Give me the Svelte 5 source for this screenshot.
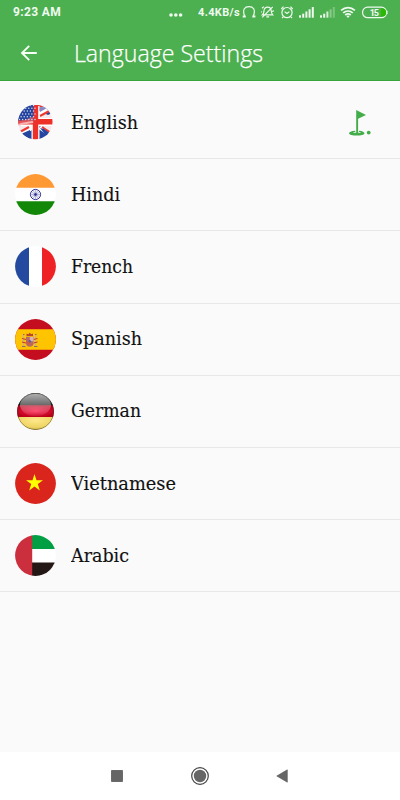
<script>
  const languages = [
    { name: 'English', flag: 'en', width: 67 },
    { name: 'Hindi', flag: 'in', width: 49 },
    { name: 'French', flag: 'fr', width: 62 },
    { name: 'Spanish', flag: 'es', width: 71 },
    { name: 'German', flag: 'de', width: 70 },
    { name: 'Vietnamese', flag: 'vn', width: 105 },
    { name: 'Arabic', flag: 'ae', width: 58 }
  ];
  const stars = [];
  for (let r = 0; r < 6; r++) for (let c = 0; c < 6; c++) stars.push([3 + c * 3.1 + (r % 2) * 1.5, 3.5 + r * 2.8]);
  const spokes = Array.from({ length: 12 }, (_, i) => i * 30);
</script>

<div class="screen">
  <header>
    <div class="status">
      <span class="time">9:23 AM</span>
      <svg class="dots" width="14" height="4" viewBox="0 0 14 4" fill="#eefaee"><circle cx="2" cy="2" r="1.8" /><circle cx="6.8" cy="2" r="1.8" /><circle cx="11.6" cy="2" r="1.8" /></svg>
      <span class="speed">4.4KB/s</span>
      <svg class="icons" width="148" height="16" viewBox="241 4 148 16" fill="none" stroke="#effaef" stroke-width="1.2">
        <path d="M244.600 16 C242 9 245 6.700 249 6.700 S256 9 253.400 16" />
        <path d="M242.700 16.500h3.100M252.300 16.500h3.100" stroke-width="2" />
        <path d="M262.500 14.800c1.500-1.300 1.300-2.500 1.500-4.300.3-2.500 1.900-3.400 3.700-3.400s3.300 1.500 3.500 3.700c.1 1.700.3 2.700 1.500 4zM266.300 16.800h2.800M262.200 17.300l10.500-10.500M262 8.200l1.800-1.600M271.800 11.500l2.200-.8M262 12l-.9-.2" />
        <circle cx="287" cy="12.600" r="5.100" />
        <path d="M284.600 11.600l2.400 1.900 2.400-1.900M281.300 9l2.200-2.300M292.700 9l-2.200-2.300M283.200 16.800l-1.200 1.200M290.800 16.800l1.200 1.200" />
        <g stroke="none" fill="#effaef">
          <rect x="299" y="15.300" width="2" height="2.400" /><rect x="302.200" y="13.700" width="2" height="4" /><rect x="305.400" y="11.500" width="2" height="6.200" /><rect x="308.600" y="9.300" width="2" height="8.400" /><rect x="311.800" y="7" width="2" height="10.700" />
          <rect x="320" y="15.300" width="2" height="2.400" /><rect x="323.200" y="13.700" width="2" height="4" /><rect x="326.400" y="11.500" width="2" height="6.200" opacity=".85" /><rect x="329.600" y="9.300" width="2" height="8.400" opacity=".38" /><rect x="332.800" y="7" width="2" height="10.700" opacity=".3" />
        </g>
        <path d="M341.100 10.400C345.200 6.600 350.800 6.600 354.900 10.400M343.200 12.900C346 10.400 350 10.400 352.800 12.900M345.200 15C346.800 13.600 349.200 13.600 350.800 15" stroke-width="1.700" />
        <path d="M346.300 16.100Q348 15 349.700 16.100L348 17.900z" fill="#effaef" stroke="none" />
        <rect x="362.600" y="7.100" width="23.800" height="10.600" rx="5" />
        <path d="M381 8.500h1.300a3.600 3.600 0 0 1 0 7.800H381z" fill="#28b900" stroke="none" />
        <path d="M387.200 10.700v3.400" stroke-width=".8" />
        <text x="369.800" y="15.600" font-size="9" font-weight="700" font-family="Roboto, sans-serif" textLength="9" fill="#effaef" stroke="none">15</text>
      </svg>
    </div>
    <div class="toolbar">
      <svg class="back" width="18" height="18" viewBox="0 0 18 18" fill="none" stroke="#f5fff5" stroke-width="1.900"><path d="M16.800 9H2.500M9.200 1.800L2 9L9.200 16.200" /></svg>
      <svg class="title" width="200" height="36" viewBox="0 0 200 36"><text x="0" y="27" textLength="189" lengthAdjust="spacingAndGlyphs">Language Settings</text></svg>
    </div>
  </header>

  <main>
    {#each languages as { name, flag, width }}
      <div class="row">
        <svg class="flag" width="41" height="41" viewBox="0 0 41 41">
          <defs>
            <clipPath id="disc-{flag}"><circle cx={flag === 'en' ? 20.3 : 20.5} cy={flag === 'en' ? 20 : 20.5} r={flag === 'en' ? 17.2 : flag === 'de' ? 18.5 : 20.4} /></clipPath>
          </defs>
          <g clip-path="url(#disc-{flag})">
            {#if flag === 'en'}
              <path fill="#f5e9ec" d="M0 0h41v41H0z" />
              <path d="M22 3h10l5 8-4 2-11-5zM24 24h4l8 8-3 8h-9zM5 33l9-5h3v11H8z" fill="#2446a0" />
              <path d="M22 13L37 5M25 25l13 9M17 25L4 33M21 3h15" stroke="#fff" stroke-width="5" />
              <path d="M25 14L38 7M27 25l12 8M14 25L3 31M22 4h9" stroke="#ee3930" stroke-width="2.100" />
              <path d="M25 26l8 10 3-4-7-5zM6 32l9-4v9z" fill="#2446a0" />
              <path d="M24 5l8 1-7 4z" fill="#8a86c0" />
              <path d="M3 20h35M20.500 4v35" stroke="#fff" stroke-width="8" />
              <path d="M3 19.800h35M20.500 3v36" stroke="#ed3028" stroke-width="5.400" />
              <path d="M0 0h18.500v18.500H0z" fill="#24439e" />
              <path d="M3 19.500c6-1 10-3 15.500-5v7H3z" fill="#e36065" opacity=".75" />
              <path d="M3 23c5-2 10-2 15-3" stroke="#f6b5b2" stroke-width="2" fill="none" />
              {#each stars as [x, y]}<circle cx={x} cy={y} r=".75" fill="#d3dcf0" />{/each}
            {:else if flag === 'in'}
              <path fill="#fff" d="M0 0h41v41H0z" /><path fill="#ff9933" d="M0 0h41v13.800H0z" /><path fill="#138808" d="M0 27.300h41V41H0z" />
              <g stroke="#34349a" fill="none"><circle cx="20.500" cy="20.500" r="5.100" stroke-width="1" />
                {#each spokes as a}<path d="M20.500 20.500v-4.700" stroke-width=".35" transform="rotate({a} 20.500 20.500)" />{/each}
                <circle cx="20.500" cy="20.500" r=".9" fill="#34349a" /></g>
            {:else if flag === 'fr'}
              <path fill="#fff" d="M0 0h41v41H0z" /><path fill="#234a9e" d="M0 0h14v41H0z" /><path fill="#ee2224" d="M27 0h14v41H27z" />
            {:else if flag === 'es'}
              <path fill="#c50d20" d="M0 0h41v41H0z" /><path fill="#ffc400" d="M0 10.300h41v20.400H0z" />
              <path d="M8.500 16v11M20.500 16v11" stroke="#d4b08a" stroke-width="1.500" />
              <path d="M7 19.500l4 1M18.500 20.500l4-1M7 23l4 1M18.500 24l4-1" stroke="#bf2630" stroke-width=".9" />
              <path d="M7 27.500h3.500M19 27.500h3.500M8 15.500h1.500M20 15.500h1.500" stroke="#8b6c6f" stroke-width="1.200" />
              <path d="M11 17.800h7.500v7q-.5 3-3.700 3-3.300 0-3.800-3z" fill="#b66a65" /><path d="M14.800 18h3.600v4.200h-3.600z" fill="#d8b2b4" /><path d="M11.600 22h3v4l-2-.5z" fill="#d45c32" />
              <path d="M11.500 17v-2.500l1.700.7 1.500-1.500 1.600 1.500 1.700-.7V17z" fill="#b84524" /><circle cx="14.800" cy="22.200" r="1.200" fill="#625b9f" />
            {:else if flag === 'de'}
              <linearGradient id="shine" x2="0" y2="1"><stop stop-color="#fff" stop-opacity=".68" /><stop offset=".5" stop-color="#fff" stop-opacity=".38" /><stop offset="1" stop-color="#fff" stop-opacity=".04" /></linearGradient>
              <radialGradient id="gold" cx=".5" cy=".2" r=".8"><stop stop-color="#ffe98b" /><stop offset=".6" stop-color="#eed462" /><stop offset="1" stop-color="#a58c29" /></radialGradient>
              <radialGradient id="ruby"><stop stop-color="#ff2450" /><stop offset="1" stop-color="#b9001a" /></radialGradient>
              <path fill="#111" d="M0 0h41v15H0z" /><path fill="url(#ruby)" d="M0 14.200h41v12H0z" /><path fill="url(#gold)" d="M0 26h41v15H0z" />
              <ellipse cx="20.500" cy="13.700" rx="15.500" ry="11.500" fill="url(#shine)" />
              <circle cx="20.500" cy="20.500" r="18.100" fill="none" stroke="#353529" stroke-width=".8" opacity=".65" />
            {:else if flag === 'vn'}
              <path fill="#da251d" d="M0 0h41v41H0z" /><path fill="#ff0" d="M19.500 11l2 6.200H28l-5.200 3.900 2 6.400-5.300-3.900-5.300 3.900 2-6.400L11 17.200h6.500z" />
            {:else}
              <path fill="#fff" d="M0 0h41v41H0z" /><path fill="#009f43" d="M17 0h24v14H17z" /><path fill="#231815" d="M17 27.500h24V41H17z" /><path fill="#cb2f3d" d="M0 0h17.200v41H0z" />
            {/if}
          </g>
        </svg>
        <svg class="label" width="130" height="30" viewBox="0 0 130 30"><text x="0" y="21" textLength={width} lengthAdjust="spacingAndGlyphs">{name}</text></svg>
        {#if flag === 'en'}
          <svg class="golf" width="24" height="28" viewBox="0 0 24 28" fill="#43ad49"><path d="M7.200 1L17 6 9.100 9.700V24H7.200z" /><path d="M6.300 21.700C2 22 0 23 0 24.200c0 3.200 15.500 3.200 15.500 0 0-1.200-2-2.200-5.500-2.500v1.300h1.500v.7H4.500V23h1.800z" /><circle cx="19.700" cy="23.600" r="1.900" /></svg>
        {/if}
      </div>
    {/each}
  </main>

  <nav>
    <svg width="12" height="12" viewBox="0 0 12 12"><path d="M.5.5h11v11H.5z" fill="#666" stroke="#4d4d4d" stroke-width=".7" /></svg>
    <svg width="18" height="18" viewBox="0 0 18 18"><circle cx="9" cy="9" r="8.300" fill="none" stroke="#444" stroke-width="1.200" /><circle cx="9" cy="9" r="6.200" fill="#666" /></svg>
    <svg width="12" height="14" viewBox="0 0 12 14"><path d="M.8 7L11.300.8v12.400z" fill="#666" stroke="#555" stroke-width=".6" /></svg>
  </nav>
</div>

<style>
  .screen { width: 400px; height: 800px; display: flex; flex-direction: column; background: #fafafa; overflow: hidden; }
  svg { display: block; flex: none; }
  header { height: 81px; box-sizing: border-box; background: #4caf50; border-bottom: 1px solid #37a33b; flex: none; }
  .status { height: 25px; display: flex; align-items: center; color: #effaef; font: 700 12px/25px Roboto, sans-serif; white-space: nowrap; }
  .time { width: 156px; padding-left: 13px; letter-spacing: .35px; }
  .dots { margin-top: 5px; }
  .speed { width: 43px; margin-left: 15px; font-size: 11px; letter-spacing: .35px; }
  .icons { margin-top: -1px; }
  .toolbar { height: 55px; display: flex; align-items: center; padding-left: 20px; }
  .title { margin-left: 36px; }
  .title text { font: 300 23px 'Open Sans', sans-serif; fill: #fff; stroke: #fff; stroke-width: .25px; }
  main { flex: 1; padding-top: 6px; }
  .row { height: 72.2px; box-sizing: border-box; display: flex; align-items: center; padding: 0 27px 0 15px; border-bottom: 1px solid #e7e7e7; }
  .label { margin-left: 15px; }
  .label text { font: 18px 'Roboto Slab', 'DejaVu Serif', serif; fill: #111; stroke: #111; stroke-width: .15px; }
  .golf { margin-left: auto; }
  nav { height: 48px; flex: none; display: flex; align-items: center; justify-content: space-between; padding: 0 112px 0 111px; background: #fff; }
</style>
